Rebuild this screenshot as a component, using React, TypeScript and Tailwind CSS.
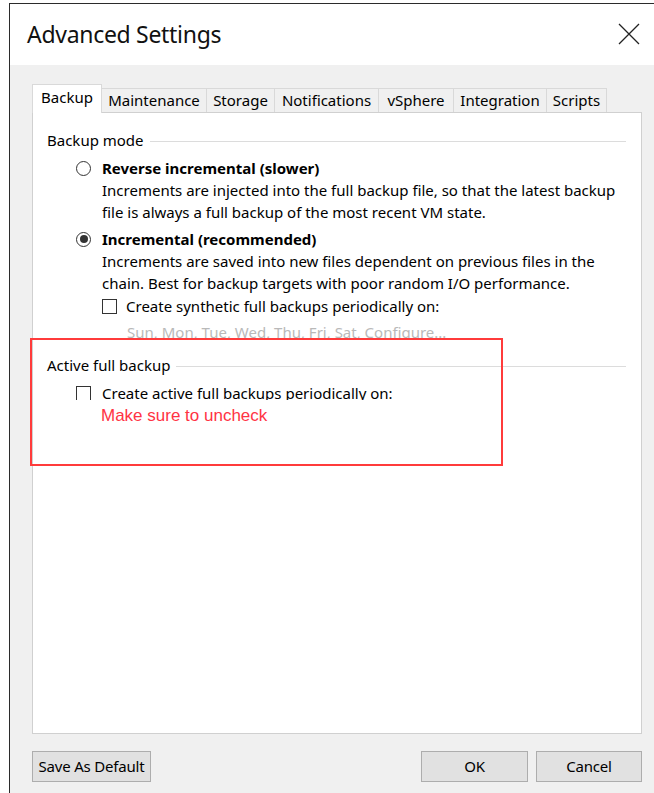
import React from "react";

const tabs = [
  { label: "Backup", w: "w-[70px]", active: true },
  { label: "Maintenance", w: "w-[106px]" },
  { label: "Storage", w: "w-[69px]" },
  { label: "Notifications", w: "w-[105px]" },
  { label: "vSphere", w: "w-[76px]" },
  { label: "Integration", w: "w-[94px]" },
  { label: "Scripts", w: "w-[61px]" },
];

const Radio = ({ checked }: { checked?: boolean }) => (
  <span className="flex h-[15px] w-[15px] shrink-0 items-center justify-center rounded-full border border-[#333] bg-white">
    {checked && <span className="h-[8px] w-[8px] rounded-full bg-[#333]" />}
  </span>
);

const Checkbox = () => (
  <span className="block h-[15px] w-[15px] shrink-0 border border-[#333] bg-white" />
);

// group caption with the etched line running to the right
const GroupLabel = ({ children }: { children: React.ReactNode }) => (
  <div className="flex items-center pr-[15px]">
    <span className="leading-[22px]">{children}</span>
    <span className="ml-[6px] mt-[3px] h-px flex-1 bg-[#dcdcdc]" />
  </div>
);

const Button = ({ children, w }: { children: React.ReactNode; w: string }) => (
  <button
    className={`${w} h-[31px] border border-[#adadad] bg-[#e1e1e1] text-[15px] tracking-[-0.2px] text-black`}
  >
    {children}
  </button>
);

export default function App() {
  return (
    <div
      className="relative h-[793px] w-[654px] overflow-hidden bg-white pl-[9px] pt-[3px] text-[15px] text-black"
      style={{ fontFamily: "'Noto Sans', 'Open Sans', sans-serif" }}
    >
      <div className="flex h-[790px] flex-col border-l-[1.5px] border-t-[1.5px] border-[#2b2b2b] bg-[#f0f0f0]">
        {/* title bar */}
        <div className="flex h-[61px] shrink-0 items-center justify-between bg-white pl-[17px] pr-[13px]">
          <span className="text-[23px] font-normal tracking-[-0.3px] text-[#111]">
            Advanced Settings
          </span>
          <svg width="24" height="24" viewBox="0 0 24 24" className="mb-[2px]">
            <path d="M2 2 L22 22 M22 2 L2 22" stroke="#222" strokeWidth="1.3" fill="none" />
          </svg>
        </div>

        <div className="flex flex-1 flex-col pl-[22px] pr-[12px] pt-[19px]">
          {/* tab strip */}
          <div className="flex h-[28px] items-end">
            {tabs.map((t) =>
              t.active ? (
                <div
                  key={t.label}
                  className={`${t.w} relative z-10 -mb-px flex h-[29px] items-center justify-center border border-b-0 border-[#d9d9d9] bg-white pb-[3px]`}
                >
                  {t.label}
                </div>
              ) : (
                <div
                  key={t.label}
                  className={`${t.w} -ml-px flex h-[24px] items-center justify-center border border-b-0 border-[#d9d9d9] bg-[#f0f0f0] first:ml-0`}
                >
                  {t.label}
                </div>
              )
            )}
          </div>

          {/* tab page */}
          <div className="h-[622px] border border-[#d0d0d0] bg-white pl-[14px] pt-[16px]">
            <GroupLabel>Backup mode</GroupLabel>

            <div className="ml-[29px] mt-[6px]">
              <div className="flex items-center gap-[11px]">
                <Radio />
                <span className="font-bold leading-[22px]">Reverse incremental (slower)</span>
              </div>
              <div className="pl-[26px] leading-[22px]">
                Increments are injected into the full backup file, so that the latest backup
                <br />
                file is always a full backup of the most recent VM state.
              </div>

              <div className="mt-[5px] flex items-center gap-[11px]">
                <Radio checked />
                <span className="font-bold leading-[22px]">Incremental (recommended)</span>
              </div>
              <div className="pl-[26px] leading-[22px]">
                Increments are saved into new files dependent on previous files in the
                <br />
                chain. Best for backup targets with poor random I/O performance.
              </div>

              <div className="ml-[26px] mt-px flex items-center gap-[9px]">
                <Checkbox />
                <span className="leading-[22px]">Create synthetic full backups periodically on:</span>
              </div>
              <div className="ml-[51px] mt-[4px] h-[17px] overflow-hidden leading-[22px] text-[#b9b9b9]">
                Sun, Mon, Tue, Wed, Thu, Fri, Sat, Configure...
              </div>
            </div>

            <div className="mt-[16px]">
              <GroupLabel>Active full backup</GroupLabel>
            </div>
            <div className="ml-[29px] mt-[6px]">
              <div className="flex h-[18px] items-start gap-[11px] overflow-hidden">
                <span className="mt-[4px]">
                  <Checkbox />
                </span>
                <span className="leading-[22px]">Create active full backups periodically on:</span>
              </div>
              <div
                className="mt-[5px] pl-[25px] text-[17px] leading-[22px] text-[#ff3344]"
                style={{ fontFamily: "'Liberation Sans', Arial, sans-serif" }}
              >
                Make sure to uncheck
              </div>
            </div>
          </div>

          {/* dialog buttons */}
          <div className="mt-[17px] flex items-center">
            <Button w="w-[119px]">Save As Default</Button>
            <div className="flex-1" />
            <Button w="w-[107px]">OK</Button>
            <div className="w-[8px]" />
            <Button w="w-[106px]">Cancel</Button>
          </div>
        </div>
      </div>

      {/* red highlight frame */}
      <div className="pointer-events-none absolute left-[30px] top-[338px] h-[128px] w-[473px] border-2 border-[#ff3b3b]" />
    </div>
  );
}
